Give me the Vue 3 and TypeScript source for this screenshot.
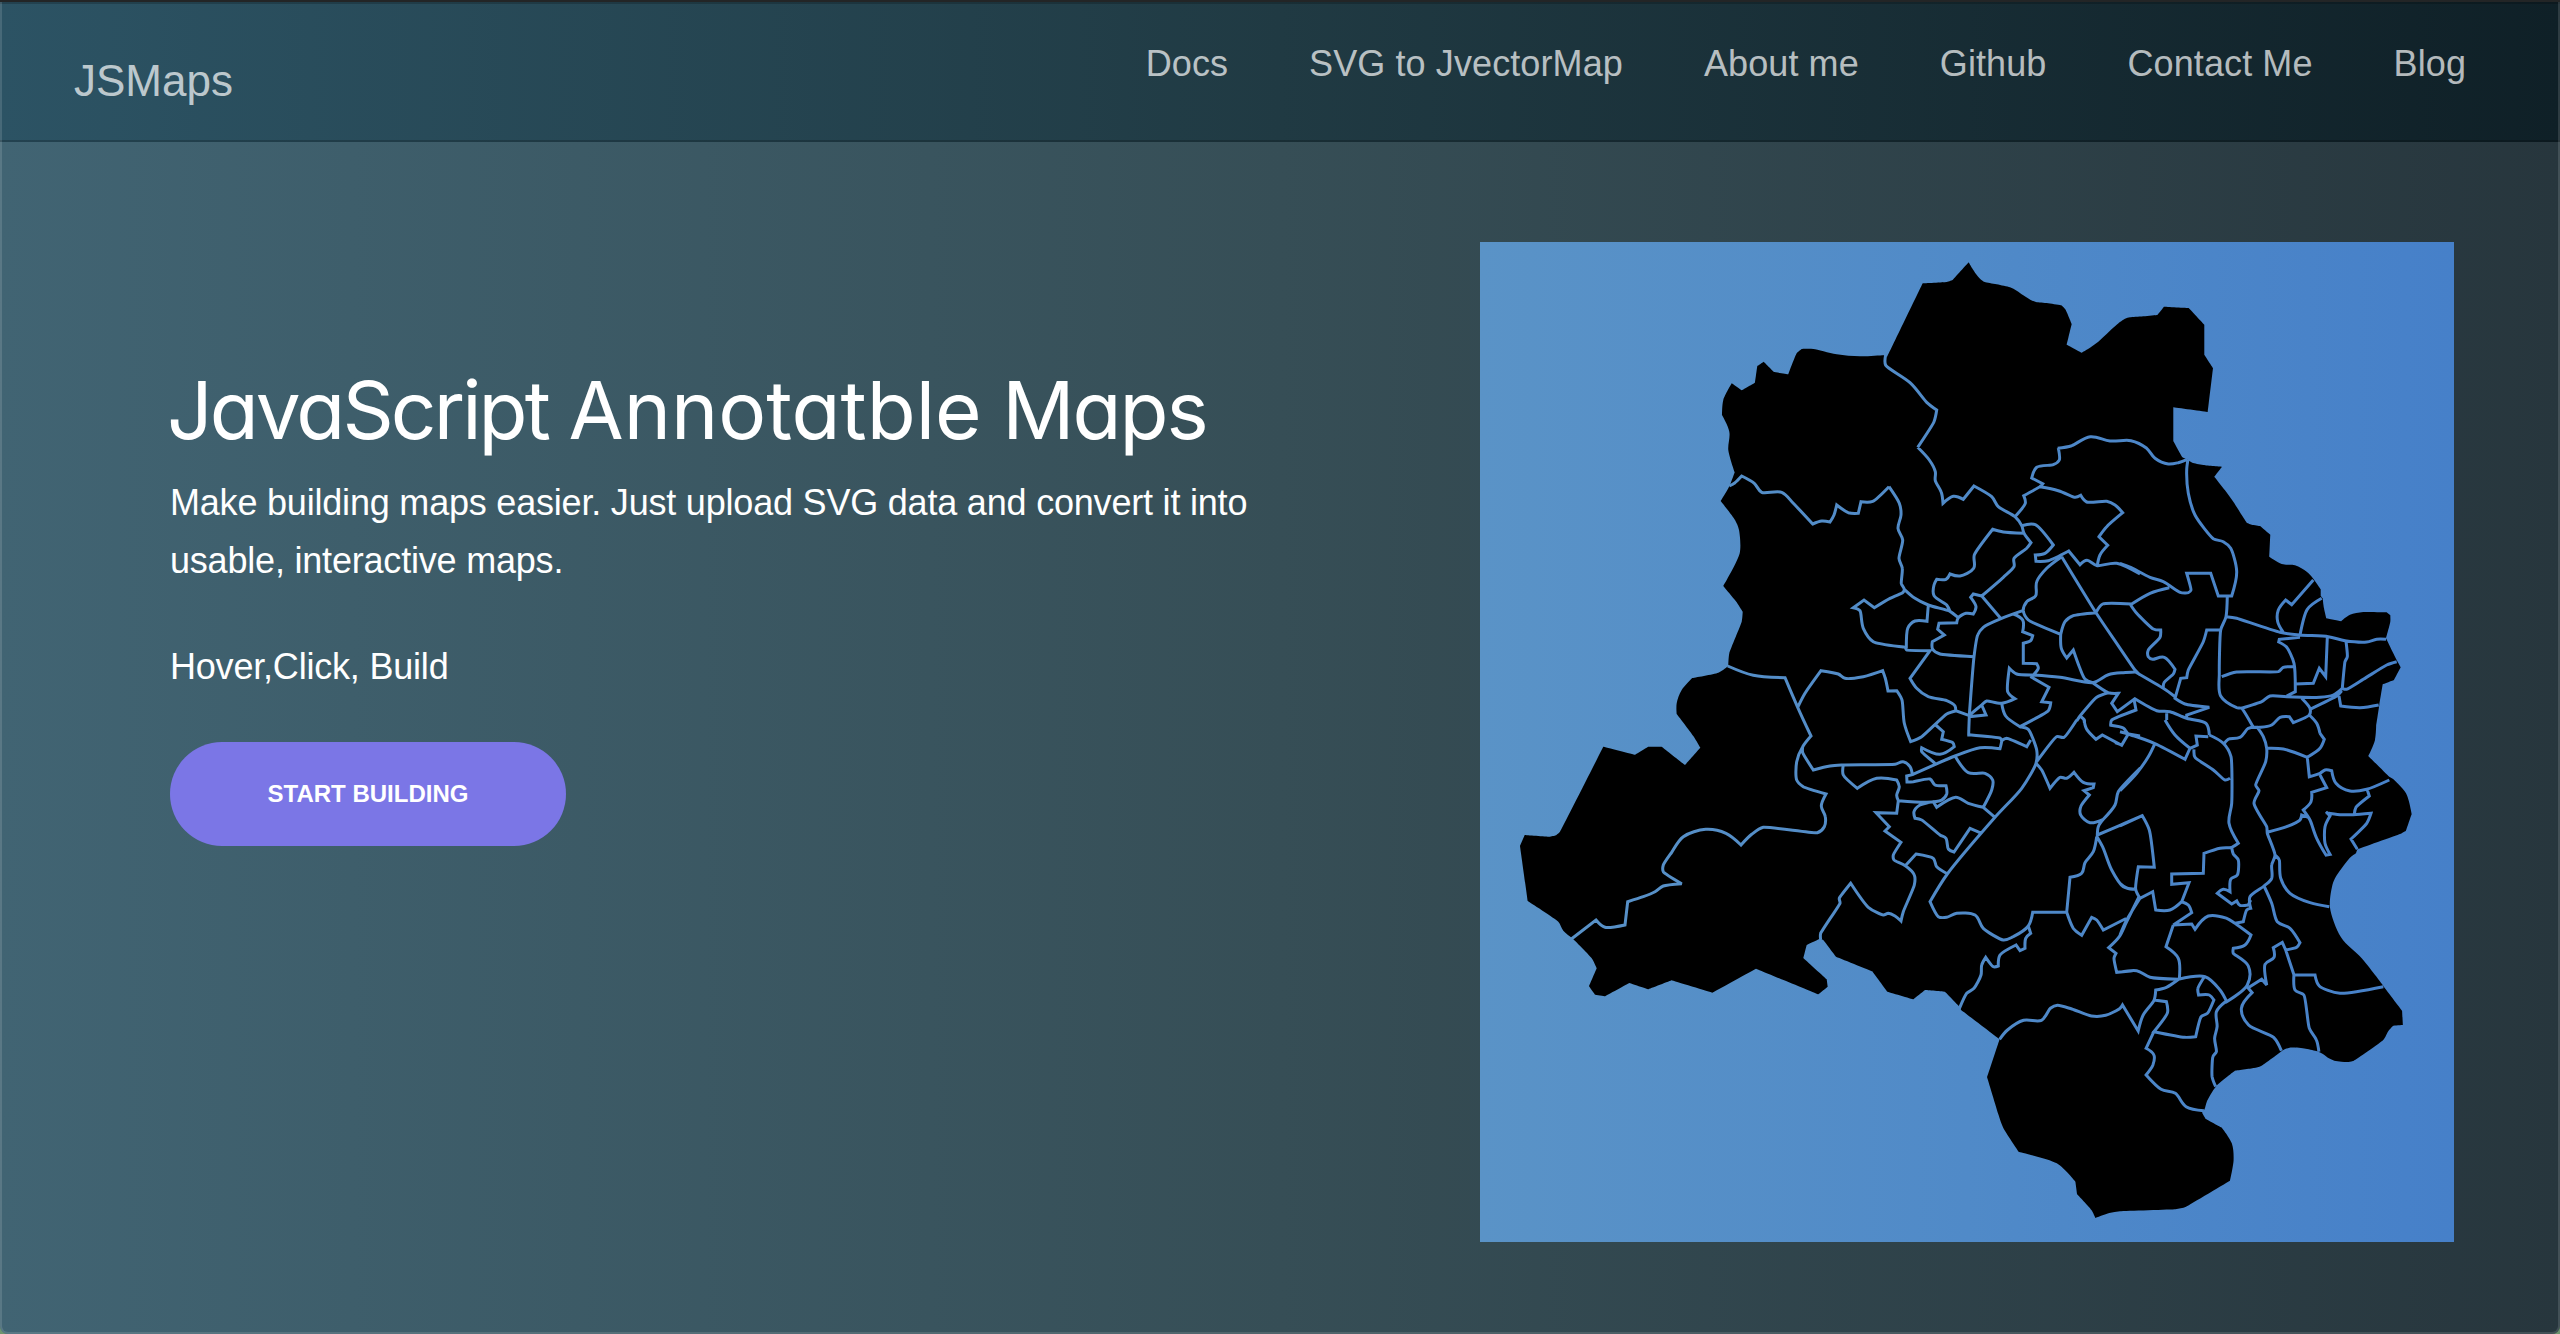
<script setup lang="ts">
type Point = [number, number]
type Origin = { x: number; y: number; sx: number; sy: number }

const navItems: string[] = ['Docs', 'SVG to JvectorMap', 'About me', 'Github', 'Contact Me', 'Blog']

// The map is digitised in sheets; each has its own origin and units per pixel.
const sheets: Record<string, Origin> = {
  nw: { x: 1480, y: 240, sx: 3, sy: 3 },
  ne: { x: 1900, y: 240, sx: 3, sy: 3 },
  sw: { x: 1480, y: 600, sx: 3, sy: 3 },
  c: { x: 1840, y: 440, sx: 3, sy: 3 },
  e: { x: 2120, y: 440, sx: 3, sy: 3 },
  cs: { x: 1840, y: 720, sx: 3, sy: 3 },
  es: { x: 2120, y: 720, sx: 3, sy: 3 },
  s: { x: 1920, y: 960, sx: 2.8, sy: 3 },
}

const outline: [string, string][] = [
  ['ne', '206,67 216,84 228,102 240,116 254,126 290,133 330,142 350,152 370,166 392,180 408,186 445,190 484,196 496,208 515,252 500,314 545,338 570,323 595,305 630,272 660,246 675,236 690,232 730,229 772,225 792,200 866,204 913,254 913,344 939,384 923,516 820,502 820,603 847,652 864,660 877,668 910,675 966,680 943,710 975,751 1000,785 1025,825 1040,848 1055,854 1080,858 1111,884 1108,950 1145,972 1185,976 1220,995 1240,1016 1262,1048 1262,1068 1268,1075 1272,1105 1279,1135 1323,1144 1350,1124 1390,1116 1460,1117 1471,1126'],
  ['e', '811,545 798,595 830,660 842,682 822,720 788,733 778,795 768,860'],
  ['es', '769,0 765,60 745,108 808,170 818,176 858,220 875,282 858,332 840,342 712,388 708,400 690,413 665,445 645,475 636,500 630,563 663,652 725,715 790,797'],
  ['s', '1297,78 1350,152 1352,195 1325,197 1312,212 1297,240 1215,302 1200,306 1180,305 1160,302 1145,295 1128,282 1112,274 1080,266 1035,263 1016,271 1005,280 955,318 935,324 882,332 830,378 803,425 797,447 790,458 800,477 845,503 873,550 878,600 868,662 745,740 730,745 715,748 560,754 530,759 491,774 480,750 440,703 435,665 383,610 277,576 233,503 220,465 188,352 223,238 195,215 115,150'],
  ['sw', '1440,1222 1395,1175 1335,1170 1300,1198 1222,1175 1177,1114 1068,1070 1030,1020 1018,1017 980,1035 970,1074 1040,1138 1043,1160 1015,1183 828,1106 697,1178 575,1141 505,1168 448,1149 375,1189 345,1184 327,1159 350,1105 335,1075 280,1018 250,992 235,965 143,903 120,738 134,705 210,710 228,706 240,695 370,440 465,464 505,440 545,440 615,495 661,443 640,408 590,342 590,310 605,270 637,234 715,218 745,198 748,160 785,65 788,35 766,0'],
  ['nw', '788,1108 730,1038 779,940 777,870 765,840 722,783 745,745 752,730 764,697 745,630 748,575 726,525 730,480 755,430 785,451 825,428 832,378 851,365 882,396 925,403 950,340 965,327 1000,327 1070,343 1140,349 1212,346 1222,350 1328,130 1400,126 1418,120 1466,67'],
]

const borders: Record<string, string[]> = {
  nw: [
    '1217,344 1217,376 1290,428 1340,487 1370,510 1362,545 1313,622',
    '748,738 765,728 785,708 823,730 845,757 905,757 940,790 998,852 1025,843 1050,846 1062,825 1070,795 1105,818 1135,820 1143,785 1178,784 1227,740',
  ],
  ne: ['473,625 515,617 571,590 630,603 693,602 740,625 765,655 805,672 835,668 862,658'],
  c: [
    '147,140 178,190 183,225 174,265 188,300 177,355 187,385 184,430 193,448 188,458 150,475 103,503 72,480 40,503 60,512 70,565 100,605 195,622 200,630 270,632 210,715 230,745 265,770 320,782 345,798 347,812 386,826',
    '233,22 268,60 286,95 286,122 304,157 309,190 340,169 370,178 402,138 455,170 475,200 525,230 545,257 552,280 573,308 560,325 522,355 522,380 490,412 425,468 483,536',
    '525,230 556,190 551,167 600,140 608,131 575,114 590,82 640,74 658,60 655,24',
    '600,140 655,152 705,172 722,166 740,186 800,184 825,195 848,218 800,260 777,290 803,316 780,345 772,377',
    '545,257 586,254 640,315 615,340 586,345 588,364 625,362 686,333 720,374 741,361 772,377 830,370 900,402',
    '552,280 490,276 458,268 403,345 401,385 360,408 330,402 318,418 290,418 282,435 282,467 320,495 330,514',
    '193,448 225,475 265,495 330,514 355,533',
    '265,495 261,544 225,543 203,565 199,625',
    '425,468 400,462 392,472 408,500 400,522 378,520 355,533 350,548 297,550 293,568 313,585 277,605 278,628 300,642 402,650',
    '388,826 402,650 413,585 430,562 483,536 548,512',
    '665,350 620,385 590,425 587,467 560,485 550,512 565,540 662,583 664,625 680,654 700,630 718,680 735,717 758,728',
    '665,350 768,518 830,610 885,690 900,705',
    '768,518 700,527 675,545 662,583',
    '768,518 788,492 875,492',
    '520,522 548,540 548,575 578,587 572,602 550,610 550,670 590,671 595,685 580,705',
    '580,705 530,702 508,685 503,755 525,776 485,790 440,783 425,795 388,826',
    '580,705 660,712 758,728 805,704 850,698 885,696',
    '580,705 575,712 627,742 605,785 632,788 625,812 540,860 497,828 485,790',
    '425,795 438,825 388,830 386,885 387,889',
    '758,728 805,758 835,760 815,790 832,815 882,778 888,810 815,840 812,856 850,864 865,882 900,892',
    '805,758 770,772 720,828 710,843',
    '720,828 733,840 733,850',
  ],
  sw: [
    '743,198 820,226 915,233 953,322 993,408 968,440 950,485 950,540 970,560 1038,582 1024,618 1036,650 1033,680 1012,698 850,682 815,703 783,735 738,700 677,688 610,710 575,757 550,795 550,815 605,851 550,858 525,875 490,890 443,905 435,975 375,982 348,960 275,1016',
    '953,322 975,280 1023,212 1075,222 1095,235 1150,230 1208,212 1216,235 1224,273 1250,272 1266,300 1273,370 1292,425 1325,410 1400,342 1430,332',
    '968,440 968,458 1000,510 1050,498 1090,495 1245,493 1270,485 1290,500 1297,524 1280,528 1281,546 1300,545 1350,537 1365,555 1398,557 1400,582 1385,600 1340,607 1255,602 1250,585 1258,560 1250,540 1190,535 1132,565 1090,525 1090,495',
    '1255,602 1250,640 1188,638 1228,680 1215,693 1263,727 1240,765 1242,780 1276,797 1303,825 1303,855 1270,935 1263,963 1245,948 1225,940 1210,945 1165,922 1112,850 1078,895 1080,910 1022,1000 1022,1020',
    '1276,797 1308,762 1360,775 1370,800 1403,822',
  ],
  cs: [
    '387,40 387,44 480,54 485,62 480,86 420,83 345,108 217,164',
    '485,62 500,55 560,80 572,60',
    '285,130 245,95 245,83 300,103 343,80 338,68 305,58 310,35 287,15',
    '345,108 385,158 435,160 458,180 455,210 430,262 465,292',
    '430,262 385,250 347,232 290,262 280,245 240,255 222,275 225,295 245,300 300,345 318,355 325,387 342,396 390,325 425,340',
    '540,20 565,28 590,90 588,130 545,205 465,292 322,462 270,545 295,590 320,592 350,580 405,585 430,625 490,660 520,650 565,618 578,577 680,577 690,472 725,460 735,428 760,395 770,350',
    '710,0 672,52 650,50 590,125',
    '732,0 740,28 768,58 787,45 845,76 865,42 900,48',
    '588,130 605,150 630,205 660,172 680,175 702,157 730,187 762,192 760,203 732,212 748,225 722,260 722,285 750,308 790,298 775,320 772,352',
    '790,298 825,255 835,215 900,145',
    '772,345 840,316 907,287',
    '772,352 790,385 815,450 850,500 888,508',
    '897,530 860,605 838,650 806,683 828,700 822,715 830,757 880,752',
    '680,577 700,625 725,646 755,592 770,600 790,630 855,597 862,605',
    '565,618 572,640 557,655 555,685 540,692 528,675 480,705 475,738 460,740 437,712 425,735 423,765 402,805 380,820 358,866',
  ],
  e: [
    '204,58 200,90 205,160 225,225 280,296 310,305 332,325 350,395 335,468 295,468 272,400 200,400 213,450 205,458 180,457 130,425 90,412 32,382 0,370',
    '322,468 318,530 302,570 298,700 302,768 350,803 365,805 400,862',
    '318,530 350,535 480,577 540,585 625,590 675,602 740,606 770,598 798,598',
    '490,577 473,545 475,510 497,480 515,494 580,420',
    '540,585 562,508 605,475',
    '540,592 478,598 476,606 500,622 522,670 526,755 500,768',
    '302,570 260,570 250,605 205,690 200,713 182,715 165,775 195,792 268,802 200,825 200,835',
    '305,710 350,696 475,695 490,682 522,680',
    '526,732 580,730 598,685 617,710 622,592',
    '678,604 682,650 675,665 667,745 680,748 730,718 800,675 830,665',
    '667,745 640,765 600,772 500,770 450,768 425,785 365,805',
    '545,775 570,805 568,825 520,848 508,830 480,832 455,855 420,862 400,862',
    '570,808 650,768 665,752',
    '657,768 662,798 720,803 776,795',
    '568,825 590,850 600,880',
    '35,492 90,460 148,443',
    '30,492 50,520 100,567 122,570 120,592 85,630 85,650 98,658 133,652 165,688 160,702 132,728 130,745',
    '45,695 130,745 165,770',
    '42,775 110,812 150,815 200,835 258,850 268,885',
    '140,820 140,840',
  ],
  es: [
    '135,0 165,45 210,85 195,118 103,70 25,42 0,35',
    '210,85 232,75 228,48 265,50',
    '222,88 225,112 280,150 315,180 330,175',
    '268,45 310,70 333,110 335,250 327,310 355,370 335,382 300,385 252,400 250,460 155,462 155,493 207,488 185,545 205,555 215,578 160,615',
    '310,75 325,58 360,52 385,25 412,22 430,50 440,85 437,125 407,195 417,212 402,250 440,320 442,340 465,405 455,435 455,475 432,498 390,530 392,565 380,570 370,605 345,610',
    '600,40 613,58 600,85 562,112',
    '440,85 490,87 562,112 568,170 600,160 615,150 635,152 648,190 690,213 740,208 808,180',
    '600,165 620,203 575,217 573,245 550,270 570,300 590,355 618,405 630,403 615,370 615,320 630,288 618,275',
    '742,210 748,228 708,262 703,283',
    '618,278 660,284 700,284 753,280 740,310 693,357 712,388',
    '442,337 500,320 540,300 545,285 565,292',
    '0,212 50,160 85,110 105,70',
    '0,318 67,287 88,330 103,442 55,440 47,508 60,535 98,515 107,570 150,570 185,545',
    '0,490 20,504 47,508',
    '60,535 20,600 0,645',
    '335,382 340,402 355,420 352,465 332,478 330,515 310,508 292,520 335,552 350,543 360,556 385,555 392,540',
    '160,615 215,612 225,628 265,588 320,595 345,610 393,645 375,675 340,685 340,700 385,738 382,795 320,845 300,810 255,770 175,778',
    '160,615 138,680 175,715 178,778',
    '0,757 50,752 90,772 175,778',
    '432,498 455,550 472,605 510,625 540,668 530,682 497,690 522,765 585,765 598,798 660,820 790,800',
    '465,405 478,420 482,475 510,520 570,548 628,560',
    '497,690 487,667 460,683 462,712 435,733 440,795 425,778 387,802',
    '25,42 5,75 -15,68',
  ],
  s: [
    '223,238 245,210 290,181 340,181 365,145 385,136 425,147 480,168 520,166 560,145 567,135 611,213 625,165 655,122 660,90 690,82 725,57',
    '655,120 690,125 693,158 655,215 740,232 772,230 787,170 805,160 823,120 810,105 780,105 778,85 798,47',
    '655,215 633,265 655,285 652,315 633,345 675,388 715,400 745,440 795,452',
    '855,125 830,155 832,200 825,235 830,275 820,290 818,350 828,380',
    '917,82 930,98 900,145 920,195 990,232 1012,272',
    '1047,45 1050,90 1075,105 1090,205 1110,240 1117,275',
  ],
}

function toPoints(sheet: string, data: string): Point[] {
  const o = sheets[sheet]
  return data.split(' ').map((pair): Point => {
    const [x, y] = pair.split(',').map(Number)
    return [o.x + x / o.sx, o.y + y / o.sy]
  })
}

// Joins points with gentle curves; turns whose cosine is under minCos stay sharp.
function toPath(p: Point[], minCos: number): string {
  const tangent = (i: number): Point => {
    if (i <= 0 || i >= p.length - 1) return [0, 0]
    const a: Point = [p[i][0] - p[i - 1][0], p[i][1] - p[i - 1][1]]
    const b: Point = [p[i + 1][0] - p[i][0], p[i + 1][1] - p[i][1]]
    const la = Math.hypot(...a)
    const lb = Math.hypot(...b)
    if (!la || !lb) return [0, 0]
    const cos = (a[0] * b[0] + a[1] * b[1]) / (la * lb)
    if (cos < minCos) return [0, 0]
    const ux = a[0] / la + b[0] / lb
    const uy = a[1] / la + b[1] / lb
    const n = Math.hypot(ux, uy)
    const k = Math.min(la, lb) * 0.33
    return [(ux / n) * k, (uy / n) * k]
  }
  let d = `M${p[0][0].toFixed(1)} ${p[0][1].toFixed(1)}`
  for (let i = 0; i < p.length - 1; i++) {
    const s = tangent(i)
    const e = tangent(i + 1)
    const nums = [p[i][0] + s[0], p[i][1] + s[1], p[i + 1][0] - e[0], p[i + 1][1] - e[1], p[i + 1][0], p[i + 1][1]]
    d += 'C' + nums.map((v) => v.toFixed(1)).join(' ')
  }
  return d
}

const outlinePath = toPath(outline.flatMap(([k, d]) => toPoints(k, d)), 0.88) + 'Z'
const borderPath = Object.entries(borders)
  .flatMap(([k, list]) => list.map((d) => toPath(toPoints(k, d), 0.5)))
  .join('')
</script>

<template>
  <div class="page">
    <header class="navbar">
      <a class="brand">JSMaps</a>
      <nav class="links">
        <a v-for="item in navItems" :key="item">{{ item }}</a>
      </nav>
    </header>
    <main class="hero">
      <section class="intro">
        <h1><span class="tight">JavaScript</span> <span>Annotatble</span> <span class="snug">Maps</span></h1>
        <p class="lead">Make building maps easier. Just upload SVG data and convert it into<br />usable, interactive maps.</p>
        <p class="tagline">Hover,Click, Build</p>
        <button type="button">START BUILDING</button>
      </section>
      <svg class="map" viewBox="1480 242 974 1000" width="974" height="1000">
        <defs>
          <linearGradient id="sea" gradientUnits="userSpaceOnUse" x1="1480" y1="0" x2="2454" y2="0">
            <stop offset="0" stop-color="#5a93c7" />
            <stop offset="0.5" stop-color="#508ac8" />
            <stop offset="1" stop-color="#4680c9" />
          </linearGradient>
        </defs>
        <rect x="1480" y="242" width="974" height="1000" fill="url(#sea)" />
        <path :d="outlinePath" fill="#000" />
        <path :d="borderPath" fill="none" stroke="url(#sea)" stroke-width="3" stroke-linejoin="miter" stroke-miterlimit="3" />
      </svg>
    </main>
  </div>
</template>

<style>
body {
  background: #6e9470;
}
</style>

<style scoped>
.page {
  position: relative;
  box-sizing: border-box;
  width: 2560px;
  height: 1334px;
  overflow: hidden;
  border-top: 2px solid #232526;
  border-radius: 0 0 8px 8px;
  background: linear-gradient(90deg, #416473, #364e56 50%, #27363d);
  font-family: "Liberation Sans", Arial, sans-serif;
  color: #fff;
}
.page::after {
  content: "";
  position: absolute;
  inset: 0;
  border: 2px solid rgba(255, 255, 255, 0.13);
  border-top: 0;
  border-radius: 0 0 8px 8px;
}
.navbar {
  box-sizing: border-box;
  height: 140px;
  padding: 0 94px 0 74px;
  display: flex;
  justify-content: space-between;
  background: linear-gradient(90deg, #2c5364, #203a43 50%, #0f2027);
  border: 2px solid rgba(0, 0, 0, 0.2);
  border-width: 2px 0;
  color: rgba(255, 255, 255, 0.7);
}
.brand {
  font-size: 44px;
  line-height: 50px;
  margin-top: 52px;
}
.links {
  display: flex;
  gap: 81px;
  margin-top: 40px;
  font-size: 36px;
  line-height: 40px;
  letter-spacing: 0.1px;
  white-space: nowrap;
}
.hero {
  display: flex;
  justify-content: space-between;
  padding: 100px 106px 0 170px;
}
.intro {
  padding-top: 118px;
}
h1 {
  margin: 0 0 0 -3px;
  font-family: Inter, Lato, sans-serif;
  font-feature-settings: "cv11";
  font-weight: 400;
  font-size: 80px;
  line-height: 100px;
  word-spacing: -2px;
  white-space: nowrap;
}
.tight {
  letter-spacing: -2.9px;
}
.snug {
  letter-spacing: -2px;
}
p {
  margin: 0;
  font-size: 36px;
  line-height: 58px;
  letter-spacing: -0.2px;
  white-space: nowrap;
}
.lead {
  margin-top: 14px;
}
.tagline {
  margin-top: 48px;
}
button {
  display: block;
  width: 396px;
  height: 104px;
  margin-top: 46px;
  padding: 0;
  border: 0;
  border-radius: 52px;
  background: #7b76e6;
  color: #fff;
  font: bold 24px "Liberation Sans", Arial, sans-serif;
}
.map {
  display: block;
  flex: none;
}
</style>
